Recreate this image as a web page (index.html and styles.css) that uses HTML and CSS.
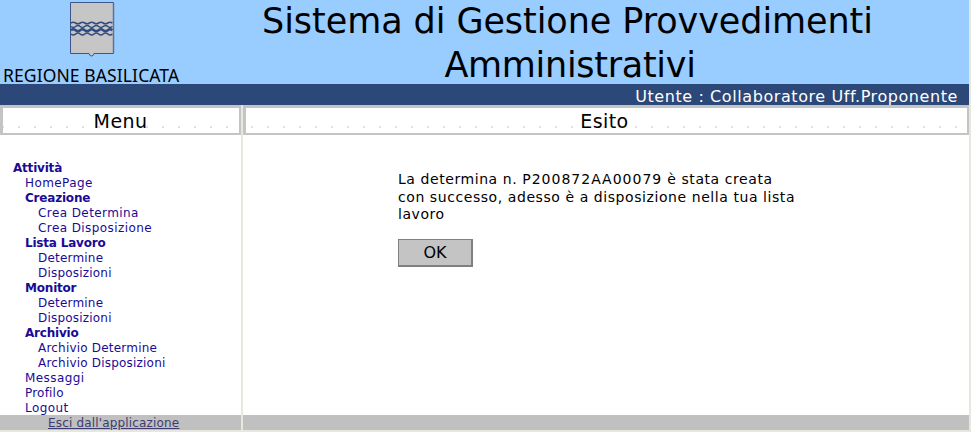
FILE: index.html
```html
<!DOCTYPE html>
<html lang="it">
<head>
<meta charset="utf-8">
<title>Sistema di Gestione Provvedimenti Amministrativi</title>
<link rel="stylesheet" href="styles.css">
</head>
<body>
<div class="app">
  <header class="header">
    <div class="brand">
      <svg class="crest" width="46" height="58" viewBox="0 0 46 58">
        <path d="M1.500 2.500h43v51h-19.500q-.5 2.500-2.500 2.500t-2.500-2.500H1.500z" fill="#c6c6c6" stroke="#3d5588"/>
        <path d="M44.500 3v50" stroke="#5c719c" stroke-width="1.500"/>
        <g fill="none" stroke="#2f4b80" stroke-width="1.500">
          <path d="M2 23q2.300-1.500 4.600 0t4.600 0 4.600 0 4.600 0 4.600 0 4.600 0 4.600 0 4.600 0 4.600 0"/>
          <path d="M2 26.500q2.300 1.800 4.600 0t4.600 0 4.600 0 4.600 0 4.600 0 4.600 0 4.600 0 4.600 0 4.600 0"/>
          <path d="M2 30.200q2.300-1.800 4.600 0t4.600 0 4.600 0 4.600 0 4.600 0 4.600 0 4.600 0 4.600 0 4.600 0" stroke-width="2.400"/>
          <path d="M2 34q2.300 2 4.600 0t4.600 0 4.600 0 4.600 0 4.600 0 4.600 0 4.600 0 4.600 0 4.600 0"/>
        </g>
      </svg>
      <div class="brand-name">REGIONE BASILICATA</div>
    </div>
    <h1 class="title"><span class="title-first">Sistema di Gestione Provvedimenti</span><br><span class="title-second">Amministrativi</span></h1>
  </header>
  <div class="userbar"><span>Utente : Collaboratore Uff.Proponente</span></div>
  <div class="columns">
    <nav class="menu">
      <h2 class="panel-title">Menu</h2>
      <ul class="tree">
        <li class="group">Attività</li>
        <li class="l1 wide">HomePage</li>
        <li class="l1 group">Creazione</li>
        <li class="l2 wide">Crea Determina</li>
        <li class="l2 wide">Crea Disposizione</li>
        <li class="l1 group">Lista Lavoro</li>
        <li class="l2">Determine</li>
        <li class="l2">Disposizioni</li>
        <li class="l1 group">Monitor</li>
        <li class="l2">Determine</li>
        <li class="l2">Disposizioni</li>
        <li class="l1 group">Archivio</li>
        <li class="l2">Archivio Determine</li>
        <li class="l2">Archivio Disposizioni</li>
        <li class="l1 wide">Messaggi</li>
        <li class="l1">Profilo</li>
        <li class="l1 wide">Logout</li>
      </ul>
      <div class="foot"><a class="exit" href="#">Esci dall'applicazione</a></div>
    </nav>
    <main class="content">
      <h2 class="panel-title panel-title-main">Esito</h2>
      <div class="message">
        <p>La determina n. <span class="number">P200872AA00079</span> è stata creata<br>con successo, adesso è a disposizione nella tua lista<br>lavoro</p>
        <button class="ok" type="button">OK</button>
      </div>
      <div class="foot"></div>
    </main>
  </div>
</div>
</body>
</html>
```

FILE: styles.css
```css
* { box-sizing: border-box; }
body {
  margin: 0;
  background: #fff;
  color: #000;
  font-family: Verdana, "DejaVu Sans", sans-serif;
}
.app {
  width: 971px;
  height: 432px;
  border-right: 2px solid #e7e7df;
  border-bottom: 2px solid #e7e7df;
}
.header {
  display: flex;
  height: 84px;
  background: #99ccff;
}
.brand { width: 182px; }
.crest { display: block; margin-left: 69px; }
.brand-name {
  margin: 7px 0 0 3px;
  font: 17.500px/20px "Noto Sans", sans-serif;
  letter-spacing: 0.1px;
  white-space: nowrap;
}
.title {
  flex: 1;
  margin: 0 4px 0 -12px;
  font-size: 35px;
  font-weight: 400;
  line-height: 43.500px;
  text-align: center;
  white-space: nowrap;
}
.title-first { letter-spacing: -0.08px; }
.title-second { letter-spacing: -0.3px; margin-left: 5px; }
.userbar {
  height: 21px;
  padding-right: 11px;
  background: #2b4878;
  color: #fff;
  font-size: 16px;
  letter-spacing: 0.58px;
  line-height: 25px;
  text-align: right;
}
.columns { display: flex; height: 325px; }
.menu, .content { display: flex; flex-direction: column; }
.menu { width: 243px; border-right: 2px solid #e7e7df; }
.content { flex: 1; }
.panel-title {
  flex: none;
  height: 30px;
  margin: 0;
  padding-right: 1px;
  border: 2px solid #c4c4c4;
  border-width: 3px 2px 2px 3px;
  background: #fff radial-gradient(circle, #d4d4d4 0 0.6px, transparent 1px) 8px 7px / 16px 24px repeat-x;
  font-size: 19px;
  font-weight: 400;
  letter-spacing: 0.4px;
  line-height: 26px;
  text-align: center;
}
.panel-title-main { padding-right: 4px; background-position: 14px 7px; }
.tree {
  flex: 1;
  min-height: 0;
  margin: 0;
  padding: 26px 0 0 13px;
  list-style: none;
  color: #1a0a96;
  font-size: 12px;
  letter-spacing: 0.2px;
  line-height: 15px;
}
.tree li:last-child { height: 14px; }
.group { font-weight: 700; letter-spacing: -0.2px; }
.wide { letter-spacing: 0.42px; }
.l1 { padding-left: 12px; }
.l2 { padding-left: 25px; }
.foot { flex: none; height: 15px; background: #c0c0c0; line-height: 15px; }
.exit {
  display: block;
  margin-left: 48px;
  color: #3c3c70;
  font-size: 12px;
  letter-spacing: 0.17px;
  line-height: 17px;
}
.message { flex: 1; padding: 36px 0 0 155px; white-space: nowrap; }
.message p { margin: 0; font-size: 14px; letter-spacing: 0.57px; line-height: 17.500px; }
.number { letter-spacing: 1px; }
.ok {
  display: block;
  width: 75px;
  height: 28px;
  margin-top: 15px;
  padding: 0;
  border: solid #808080;
  border-width: 1px 2px 2px 1px;
  background: #c4c4c4;
  color: #000;
  font: 16px/25px Verdana, "DejaVu Sans", sans-serif;
}
```
